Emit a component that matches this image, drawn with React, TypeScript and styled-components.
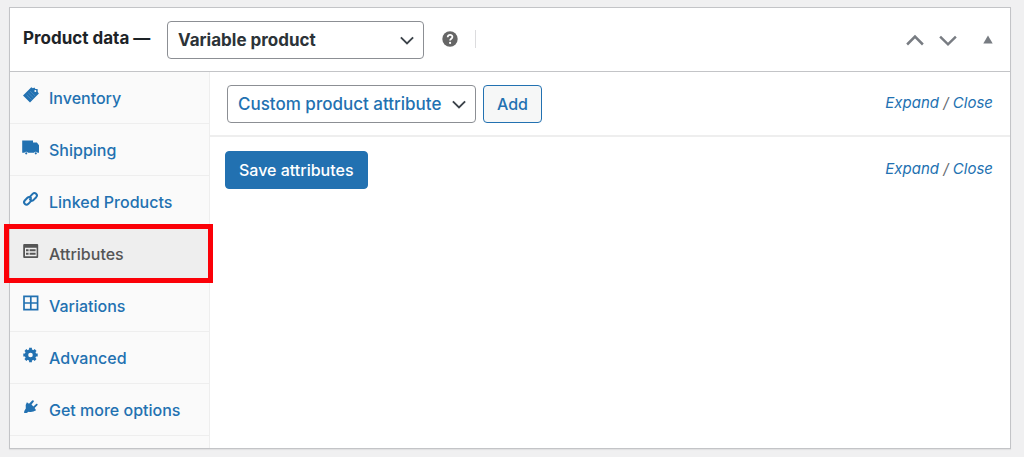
import React from 'react';
import styled, { createGlobalStyle } from 'styled-components';

const blue = '#2271b1';

const GlobalStyle = createGlobalStyle`
  * { box-sizing: border-box; }
  body {
    margin: 0;
    background: #f0f0f1;
    color: #3c434a;
    font-family: Inter, "Liberation Sans", sans-serif;
    font-size: 16px;
    line-height: 24px;
  }
  button, select { font: inherit; }
`;

const Page = styled.main`
  padding: 7px 13px 8px 9px;
`;

const Card = styled.section`
  background: #fff;
  border: 1px solid #c3c4c7;
  box-shadow: 0 1px 1px rgba(0, 0, 0, 0.06);
`;

const Header = styled.header`
  display: flex;
  align-items: center;
  height: 64px;
  padding: 0 14px 0 13px;
  border-bottom: 1px solid #c3c4c7;
`;

const Title = styled.label`
  color: #1d2327;
  font-size: 17px;
  font-weight: 700;
  width: 144px;
  padding-bottom: 4px;
  white-space: nowrap;
`;

const SelectBox = styled.span<{ $width: number }>`
  display: grid;
  align-items: center;
  width: ${(p) => p.$width}px;

  > * { grid-area: 1 / 1; }
  > svg {
    justify-self: end;
    margin-right: 10px;
    pointer-events: none;
  }
`;

const Select = styled.select<{ $strong?: boolean }>`
  appearance: none;
  width: 100%;
  height: 38px;
  padding: 0 28px 0 10px;
  border: 1px solid #8c8f94;
  border-radius: 4px;
  background: #fff;
  color: ${(p) => (p.$strong ? '#2c3338' : blue)};
  font-size: 17px;
  font-weight: ${(p) => (p.$strong ? 700 : 500)};
`;

const IconButton = styled.button`
  display: flex;
  padding: 0;
  border: 0;
  background: none;
  color: #787c82;
`;

const HelpButton = styled(IconButton)`
  margin: 0 17px 2px 18px;
  color: #666;
`;

const Divider = styled.span`
  width: 1px;
  height: 18px;
  margin-bottom: 2px;
  background: #dcdcde;
`;

const Handles = styled.div`
  display: flex;
  align-items: center;
  gap: 15px;
  margin-left: auto;

  button:last-child { margin-left: 8px; }
`;

const Body = styled.div`
  display: grid;
  grid-template-columns: 200px 1fr;
`;

const Tabs = styled.nav`
  padding-bottom: 12px;
  background: #fafafa;
  border-right: 1px solid #eee;
`;

const TabItem = styled.div<{ $active?: boolean }>`
  position: relative;
  height: 52px;
  border-bottom: 1px solid #eee;
  background: ${(p) => (p.$active ? '#eee' : 'transparent')};
`;

const TabLink = styled.a<{ $active?: boolean }>`
  display: flex;
  align-items: center;
  gap: 10px;
  height: 100%;
  padding: 0 13px;
  color: ${(p) => (p.$active ? '#555' : blue)};
  font-weight: 500;
  text-decoration: none;
  white-space: nowrap;

  svg { flex: none; margin-bottom: 5px; }
`;

const Highlight = styled.span`
  position: absolute;
  inset: -4px -4px -4px -6px;
  border: 5px solid #fb0007;
  pointer-events: none;
`;

const Toolbar = styled.div<{ $divided?: boolean }>`
  display: flex;
  align-items: center;
  gap: 7px;
  height: ${(p) => (p.$divided ? 65 : 66)}px;
  padding: 0 17px 0 ${(p) => (p.$divided ? 17 : 15)}px;
  border-bottom: ${(p) => (p.$divided ? '2px solid #eee' : '0')};
`;

const Button = styled.button<{ $primary?: boolean }>`
  height: 38px;
  padding: 0 13px;
  border: 1px solid ${blue};
  border-radius: 4px;
  background: ${(p) => (p.$primary ? blue : '#f6f7f7')};
  color: ${(p) => (p.$primary ? '#fff' : blue)};
  font-weight: 500;
  white-space: nowrap;
`;

const Toggles = styled.span`
  margin-left: auto;
  padding-bottom: 2px;
  color: #646970;
  font-size: 15px;
  font-style: italic;
  white-space: nowrap;

  a { color: ${blue}; text-decoration: none; }
`;

const Chevron = ({ up = false, size = 14, weight = 2.2 }: { up?: boolean; size?: number; weight?: number }) => (
  <svg width={size} height={size} viewBox="0 0 16 16" fill="none" stroke="currentColor" strokeWidth={weight} aria-hidden="true">
    <path d={up ? 'M1 12 8 5l7 7' : 'M1 5 8 11.800 15 5'} />
  </svg>
);

const icons: Record<string, React.ReactNode> = {
  tag: (
    <>
      <path fill="currentColor" fillRule="evenodd" d="M0 8.600 8.300.3l1.600 1 1.500-.8 1 1.400 2.200.2.200 3 1.100 1.300L7 15.400ZM12.300 3a1 1 0 1 0 .1 2 1 1 0 0 0-.1-2Z" />
      <path d="m3.600 7.800 5 4.800M5.400 6l5 4.800M7.200 4.200l5 4.800" stroke="#6fa3cd" strokeWidth=".5" />
    </>
  ),
  truck: (
    <path fill="currentColor" d="M-.8 1.500H10v2h3.900l2.100 2.800v7.500h-1.400a2 2 0 0 0-3.600 0H5a2 2 0 0 0-3.600 0H-.8Zm4 11.700a1.100 1.100 0 1 0 0 2.200 1.100 1.100 0 0 0 0-2.200Zm9.600 0a1.100 1.100 0 1 0 0 2.200 1.100 1.100 0 0 0 0-2.200Z" />
  ),
  link: (
    <g fill="none" stroke="currentColor" strokeWidth="2" strokeLinecap="round">
      <path d="m6.400 6.400 3.200-3.500c2.400-2.400 5.800.8 3.600 3.300l-2.600 2.700c-1.300 1.200-2.900.9-3.600-.3" />
      <path d="m8.600 9.300-3.200 3.500c-2.400 2.400-5.800-.8-3.600-3.300l2.600-2.700C5.700 5.600 7.300 5.900 8 7.100" />
    </g>
  ),
  form: (
    <path fill="currentColor" fillRule="evenodd" d="M1.200 1h13q1 0 1 1v12q0 1-1 1h-13q-1 0-1-1V2q0-1 1-1ZM2 4.800v8.400h11.600V4.800ZM3 6.200h2.600v2H3Zm3.600 0h6v2h-6ZM3 9.700h2.600v2H3Zm3.600 0h6v2h-6Z" />
  ),
  grid: <path fill="none" stroke="currentColor" strokeWidth="1.700" d="M1 1.300h13.600v13.400H1ZM7.800 1.300v13.400M1 8h13.600" />,
  gear: (
    <>
      <circle cx="7.500" cy="8" r="4" fill="none" stroke="currentColor" strokeWidth="3.400" />
      <path d="M7.500.8v3M7.500 12.200v3M.3 8h3M11.700 8h3M2.400 2.900 4.500 5M10.500 11l2.100 2.100M2.400 13.100 4.500 11M10.500 5l2.100-2.100" stroke="currentColor" strokeWidth="2.800" />
    </>
  ),
  plug: (
    <path fill="currentColor" d="M3.900 3.200 6 4.800 9.200 1.400q1.500-.5 1.700 1L8.500 5.600l1.900 1.800 3-2.700q1.500-.2 1.200 1.400l-3 2.800 1.500 2.400q-4 2.500-7.500 1.400L3.600 14l-2.500.1.200-2.200 1.500-2.300Q1.800 6.100 3.900 3.200Z" />
  ),
};

const tabs = [
  { label: 'Inventory', icon: 'tag' },
  { label: 'Shipping', icon: 'truck' },
  { label: 'Linked Products', icon: 'link' },
  { label: 'Attributes', icon: 'form', active: true },
  { label: 'Variations', icon: 'grid' },
  { label: 'Advanced', icon: 'gear' },
  { label: 'Get more options', icon: 'plug' },
];

const ExpandClose = () => (
  <Toggles>
    <a href="#expand">Expand</a> / <a href="#close">Close</a>
  </Toggles>
);

export default function App() {
  return (
    <Page>
      <GlobalStyle />
      <Card>
        <Header>
          <Title htmlFor="product-type">Product data —</Title>
          <SelectBox $width={257}>
            <Select id="product-type" $strong>
              <option>Variable product</option>
            </Select>
            <Chevron />
          </SelectBox>
          <HelpButton aria-label="Help">
            <svg width="16" height="16" viewBox="0 0 16 16" aria-hidden="true">
              <circle cx="8" cy="8" r="7.700" fill="currentColor" />
              <path d="M5.700 6.200c0-3.200 4.800-3 4.700-.2 0 1.700-2.300 1.800-2.300 3.500" fill="none" stroke="#fff" strokeWidth="1.800" />
              <circle cx="8.100" cy="11.900" r="1.100" fill="#fff" />
            </svg>
          </HelpButton>
          <Divider />
          <Handles>
            <IconButton aria-label="Move up"><Chevron up size={18} weight={2.2} /></IconButton>
            <IconButton aria-label="Move down"><Chevron size={18} weight={2.2} /></IconButton>
            <IconButton aria-label="Toggle panel">
              <svg width="16" height="16" viewBox="0 0 16 16" aria-hidden="true">
                <path d="M8 3.500 12.700 11.500H3.300Z" fill="currentColor" />
              </svg>
            </IconButton>
          </Handles>
        </Header>
        <Body>
          <Tabs aria-label="Product data">
            {tabs.map((tab) => (
              <TabItem key={tab.label} $active={tab.active}>
                <TabLink href={`#${tab.icon}`} $active={tab.active} aria-current={tab.active}>
                  <svg width="16" height="16" viewBox="0 0 16 16" overflow="visible" aria-hidden="true">{icons[tab.icon]}</svg>
                  {tab.label}
                </TabLink>
                {tab.active && <Highlight />}
              </TabItem>
            ))}
          </Tabs>
          <div>
            <Toolbar $divided>
              <SelectBox $width={249}>
                <Select aria-label="Attribute type">
                  <option>Custom product attribute</option>
                </Select>
                <Chevron />
              </SelectBox>
              <Button>Add</Button>
              <ExpandClose />
            </Toolbar>
            <Toolbar>
              <Button $primary>Save attributes</Button>
              <ExpandClose />
            </Toolbar>
          </div>
        </Body>
      </Card>
    </Page>
  );
}
